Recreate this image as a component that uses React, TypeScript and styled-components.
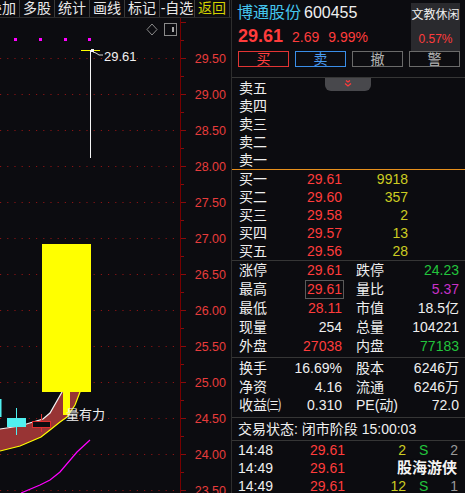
import React from "react";
import styled, { createGlobalStyle } from "styled-components";

const GlobalStyle = createGlobalStyle`
  html, body {
    margin: 0;
    padding: 0;
    background: #0c0c10;
  }
  body {
    width: 465px;
    height: 493px;
    overflow: hidden;
    font-family: "Liberation Sans", "Noto Sans CJK SC", sans-serif;
    color: #ececec;
  }
`;

const Screen = styled.div`
  display: flex;
  width: 465px;
  height: 493px;
  overflow: hidden;
  background: #0c0c10;
`;

const LeftPanel = styled.div`
  width: 231px;
  flex-shrink: 0;
  display: flex;
  flex-direction: column;
`;

const Toolbar = styled.div`
  display: flex;
  height: 18px;
  box-sizing: border-box;
  border-bottom: 1px solid #2c2c2c;
  overflow: hidden;
`;

const ToolItem = styled.div<{ $accent?: boolean; $first?: boolean }>`
  flex: 0 0 34px;
  margin-left: ${(p) => (p.$first ? "-15px" : "0")};
  border-right: 1px solid #3a3a3a;
  text-align: center;
  font-size: 14px;
  line-height: 17px;
  white-space: nowrap;
  color: ${(p) => (p.$accent ? "#d4d400" : "#e8e8e8")};
`;

const Chart = styled.svg`
  display: block;
  width: 231px;
  height: 475px;
`;

const RightPanel = styled.div`
  flex: 1;
  min-width: 0;
  border-left: 1px solid #2e2e2e;
  display: flex;
  flex-direction: column;
`;

const Header = styled.div`
  display: flex;
  justify-content: space-between;
  height: 56px;
  box-sizing: border-box;
  padding: 2px 5px 0 5px;
`;

const Quote = styled.div`
  display: flex;
  flex-direction: column;
`;

const NameRow = styled.div`
  height: 22px;
  line-height: 22px;
  font-size: 16px;
  white-space: nowrap;
`;

const StockName = styled.span`
  color: #44c6ee;
`;

const StockCode = styled.span`
  color: #f0f0f0;
  margin-left: 3px;
`;

const PriceRow = styled.div`
  display: flex;
  align-items: baseline;
  height: 24px;
  line-height: 24px;
  padding-left: 1px;
  color: #ff3c3c;
  white-space: nowrap;
`;

const LastPrice = styled.span`
  font-size: 18px;
  font-weight: bold;
`;

const Change = styled.span`
  font-size: 14px;
  margin-left: 9px;
`;

const SectorBox = styled.div`
  width: 49px;
  height: 48px;
  margin-top: 1px;
  background: #2a2a2e;
  display: flex;
  flex-direction: column;
  align-items: center;
  font-size: 12px;
  line-height: 24px;
  white-space: nowrap;
`;

const SectorName = styled.span`
  color: #f0f0f0;
`;

const SectorChange = styled.span`
  color: #ff3c3c;
`;

const ActionRow = styled.div`
  display: flex;
  gap: 6px;
  height: 16px;
  padding: 0 5px 0 6px;
  margin-bottom: 10px;
`;

const ActionButton = styled.div<{ $tone: "buy" | "sell" | "plain" }>`
  flex: 0 0 51px;
  box-sizing: border-box;
  border: 1px solid
    ${(p) => (p.$tone === "buy" ? "#e23434" : p.$tone === "sell" ? "#3a8ee8" : "#6a6a6a")};
  color: ${(p) => (p.$tone === "buy" ? "#ff4040" : p.$tone === "sell" ? "#4a9cf0" : "#b4b4b4")};
  font-size: 14px;
  line-height: 14px;
  text-align: center;
`;

const Divider = styled.div<{ $orange?: boolean }>`
  height: 1px;
  flex-shrink: 0;
  background: ${(p) => (p.$orange ? "#e8901c" : "#363636")};
`;

const SellSection = styled.div`
  position: relative;
  height: 91px;
  box-sizing: border-box;
  padding-top: 1px;
`;

const ExpandTab = styled.div`
  position: absolute;
  left: 93px;
  top: 0;
  width: 46px;
  height: 13px;
  background: #48484c;
  border-radius: 0 0 6px 6px;
  display: flex;
  justify-content: center;
  align-items: flex-start;
  padding-top: 2px;
  box-sizing: border-box;
`;

const BuySection = styled.div`
  height: 92px;
  box-sizing: border-box;
`;

const BookRow = styled.div`
  display: grid;
  grid-template-columns: 53px 50px 66px;
  height: 18px;
  line-height: 18px;
  font-size: 14px;
  padding-left: 7px;
  white-space: nowrap;
`;

const Label = styled.span<{ $pad?: number }>`
  color: #efefef;
  padding-left: ${(p) => p.$pad ?? 0}px;
`;

const Value = styled.span<{ $color?: string }>`
  justify-self: end;
  color: ${(p) => p.$color ?? "#efefef"};
`;

const Boxed = styled.span`
  justify-self: end;
  color: #ff3c3c;
  border: 1px solid #5a5a5a;
  padding: 0 1px 0 1px;
  margin-right: -2px;
  line-height: 17px;
`;

const StatsSection = styled.div<{ $row: number; $top: number; $bottom: number }>`
  padding: ${(p) => p.$top}px 0 ${(p) => p.$bottom}px 7px;
  display: grid;
  grid-template-columns: 41px 62px 54px 63px;
  grid-auto-rows: ${(p) => p.$row}px;
  line-height: ${(p) => p.$row}px;
  font-size: 14px;
  white-space: nowrap;
`;

const StatusRow = styled.div`
  height: 22px;
  line-height: 22px;
  padding-left: 6px;
  font-size: 14px;
  color: #efefef;
  white-space: nowrap;
`;

const Trades = styled.div`
  position: relative;
`;

const TradeRow = styled.div`
  display: grid;
  grid-template-columns: 50px 57px 61px 22px 30px;
  height: 18px;
  line-height: 18px;
  padding-left: 6px;
  font-size: 14px;
  white-space: nowrap;
`;

const Side = styled.span`
  color: #22c43c;
  padding-left: 13px;
`;

const Watermark = styled.div`
  position: absolute;
  right: 8px;
  top: 18px;
  line-height: 18px;
  font-size: 15px;
  font-weight: bold;
  color: #f4f4f4;
  text-shadow: 0 0 2px #0c0c10;
`;

const RED = "#ff3c3c";
const GREEN = "#22c43c";
const YELLOW = "#cccc22";
const MAGENTA = "#c832c8";

const axisLabels = [
  "29.50", "29.00", "28.50", "28.00", "27.50", "27.00", "26.50",
  "26.00", "25.50", "25.00", "24.50", "24.00", "23.50",
];

const gridY = (i: number) => 58.5 + i * 36;

const ticks = Array.from({ length: 27 }, (_, k) => 22.5 + k * 18);

const bandTop = [
  [0, 429], [20, 426], [33, 422], [43, 419], [50, 413], [62, 392], [70, 372], [78, 350],
];
const bandBottom = [
  [0, 451], [20, 446], [41, 437], [50, 430], [60, 422], [67, 417], [75, 405], [80, 392], [88, 372], [88, 350],
];

const pts = (list: number[][]) => list.map((p) => p.join(",")).join(" ");

const PriceChart = () => (
  <Chart viewBox="0 18 231 475">
    {axisLabels.map((label, i) => (
      <g key={label}>
        <line x1={0} x2={178} y1={gridY(i)} y2={gridY(i)} stroke="#8a1414" strokeDasharray="1.2 6" />
        <text x={226} y={gridY(i)} textAnchor="end" dominantBaseline="central" fontSize={12.5} fill="#e83c3c">
          {label}
        </text>
      </g>
    ))}
    <line x1={180.5} x2={180.5} y1={18} y2={493} stroke="#760000" />
    {ticks.map((y) => (
      <line
        key={y}
        x1={181}
        x2={(y - 58.5) % 36 === 0 ? 186 : 184}
        y1={y}
        y2={y}
        stroke="#8a0a0a"
      />
    ))}

    <polygon points="152,24 157,29.5 152,35 147,29.5" fill="none" stroke="#8a8a8a" />
    <rect x={164.5} y={23.5} width={12} height={12} fill="none" stroke="#8a8a8a" />
    <rect x={172} y={27} width={2} height={5} fill="#a8a8a8" />

    {[14, 39, 64, 88].map((x) => (
      <rect key={x} x={x} y={38} width={3} height={3} fill="#ff00ff" />
    ))}

    <line x1={81} x2={100} y1={50.5} y2={50.5} stroke="#ffff00" />
    <line x1={90.5} x2={90.5} y1={50} y2={158} stroke="#f5f5f5" />
    <rect x={91} y={49} width={3} height={3} fill="#f5f5f5" />
    <polyline points="93,52 96,53 99,55 103,55" fill="none" stroke="#f0f0f0" strokeWidth={0.9} />
    <text x={104} y={56} dominantBaseline="central" fontSize={13} fill="#f0f0f0">
      29.61
    </text>

    <polygon points={pts([...bandTop, ...[...bandBottom].reverse()])} fill="#983434" />
    <polyline points={pts(bandTop)} fill="none" stroke="#f5f5f5" strokeWidth={1.2} />
    <polyline points={pts(bandBottom)} fill="none" stroke="#ffff00" strokeWidth={1.2} />

    <rect x={42} y={244} width={49} height={148} fill="#ffff00" />
    <rect x={63} y={392} width={7} height={23} fill="#ffff00" />

    <polyline
      points="21,493 40,485 50,480 60,472 77,452 90,440"
      fill="none"
      stroke="#ff00ff"
      strokeWidth={1.2}
    />

    <rect x={0} y={399} width={1.5} height={18} fill="#50f0f0" />
    <line x1={16.5} x2={16.5} y1={408} y2={435} stroke="#50f0f0" />
    <rect x={7} y={418} width={19} height={9} fill="#50f0f0" />

    <line x1={41.5} x2={41.5} y1={414} y2={432} stroke="#e03030" />
    <rect x={32.5} y={421.5} width={18} height={6} fill="#0c0c10" stroke="#e03030" />

    <text x={66} y={414} dominantBaseline="central" fontSize={13} fill="#f0f0f0">
      量有力
    </text>
  </Chart>
);

const sellRows = ["卖五", "卖四", "卖三", "卖二", "卖一"];

const buyRows = [
  ["买一", "29.61", "9918"],
  ["买二", "29.60", "357"],
  ["买三", "29.58", "2"],
  ["买四", "29.57", "13"],
  ["买五", "29.56", "28"],
];

const trades = [
  ["14:48", "29.61", "2", "S", "2"],
  ["14:49", "29.61", "", "", ""],
  ["14:49", "29.61", "12", "S", "1"],
];

export default function App() {
  return (
    <>
      <GlobalStyle />
      <Screen>
        <LeftPanel>
          <Toolbar>
            <ToolItem $first>叠加</ToolItem>
            <ToolItem>多股</ToolItem>
            <ToolItem>统计</ToolItem>
            <ToolItem>画线</ToolItem>
            <ToolItem>标记</ToolItem>
            <ToolItem>-自选</ToolItem>
            <ToolItem $accent>返回</ToolItem>
          </Toolbar>
          <PriceChart />
        </LeftPanel>

        <RightPanel>
          <Header>
            <Quote>
              <NameRow>
                <StockName>博通股份</StockName>
                <StockCode>600455</StockCode>
              </NameRow>
              <PriceRow>
                <LastPrice>29.61</LastPrice>
                <Change>2.69</Change>
                <Change>9.99%</Change>
              </PriceRow>
            </Quote>
            <SectorBox>
              <SectorName>文教休闲</SectorName>
              <SectorChange>0.57%</SectorChange>
            </SectorBox>
          </Header>

          <ActionRow>
            <ActionButton $tone="buy">买</ActionButton>
            <ActionButton $tone="sell">卖</ActionButton>
            <ActionButton $tone="plain">撤</ActionButton>
            <ActionButton $tone="plain">警</ActionButton>
          </ActionRow>
          <Divider />

          <SellSection>
            <ExpandTab>
              <svg width="10" height="7" viewBox="0 0 10 7">
                <polyline points="3,0.5 5,2 7,0.5" fill="none" stroke="#ff3c3c" strokeWidth={1.2} />
                <polyline points="2,3.5 5,6 8,3.5" fill="none" stroke="#ff3c3c" strokeWidth={1.2} />
              </svg>
            </ExpandTab>
            {sellRows.map((label) => (
              <BookRow key={label}>
                <Label>{label}</Label>
              </BookRow>
            ))}
          </SellSection>
          <Divider $orange />

          <BuySection>
            {buyRows.map(([label, price, vol]) => (
              <BookRow key={label}>
                <Label>{label}</Label>
                <Value $color={RED}>{price}</Value>
                <Value $color={YELLOW}>{vol}</Value>
              </BookRow>
            ))}
          </BuySection>
          <Divider />

          <StatsSection $row={19} $top={0} $bottom={1}>
            <Label>涨停</Label>
            <Value $color={RED}>29.61</Value>
            <Label $pad={14}>跌停</Label>
            <Value $color={GREEN}>24.23</Value>

            <Label>最高</Label>
            <Boxed>29.61</Boxed>
            <Label $pad={14}>量比</Label>
            <Value $color={MAGENTA}>5.37</Value>

            <Label>最低</Label>
            <Value $color={RED}>28.11</Value>
            <Label $pad={14}>市值</Label>
            <Value>18.5亿</Value>

            <Label>现量</Label>
            <Value>254</Value>
            <Label $pad={14}>总量</Label>
            <Value>104221</Value>

            <Label>外盘</Label>
            <Value $color={RED}>27038</Value>
            <Label $pad={14}>内盘</Label>
            <Value $color={GREEN}>77183</Value>
          </StatsSection>
          <Divider />

          <StatsSection $row={18.5} $top={1} $bottom={2.5}>
            <Label>换手</Label>
            <Value>16.69%</Value>
            <Label $pad={14}>股本</Label>
            <Value>6246万</Value>

            <Label>净资</Label>
            <Value>4.16</Value>
            <Label $pad={14}>流通</Label>
            <Value>6246万</Value>

            <Label>收益㈢</Label>
            <Value>0.310</Value>
            <Label $pad={14}>PE(动)</Label>
            <Value>72.0</Value>
          </StatsSection>
          <Divider />

          <StatusRow>交易状态: 闭市阶段 15:00:03</StatusRow>
          <Divider />

          <Trades>
            {trades.map(([time, price, vol, side, count], i) => (
              <TradeRow key={i}>
                <Label>{time}</Label>
                <Value $color={RED}>{price}</Value>
                <Value $color={YELLOW}>{vol}</Value>
                <Side>{side}</Side>
                <Value $color="#9a9a9a">{count}</Value>
              </TradeRow>
            ))}
            <Watermark>股海游侠</Watermark>
          </Trades>
        </RightPanel>
      </Screen>
    </>
  );
}
